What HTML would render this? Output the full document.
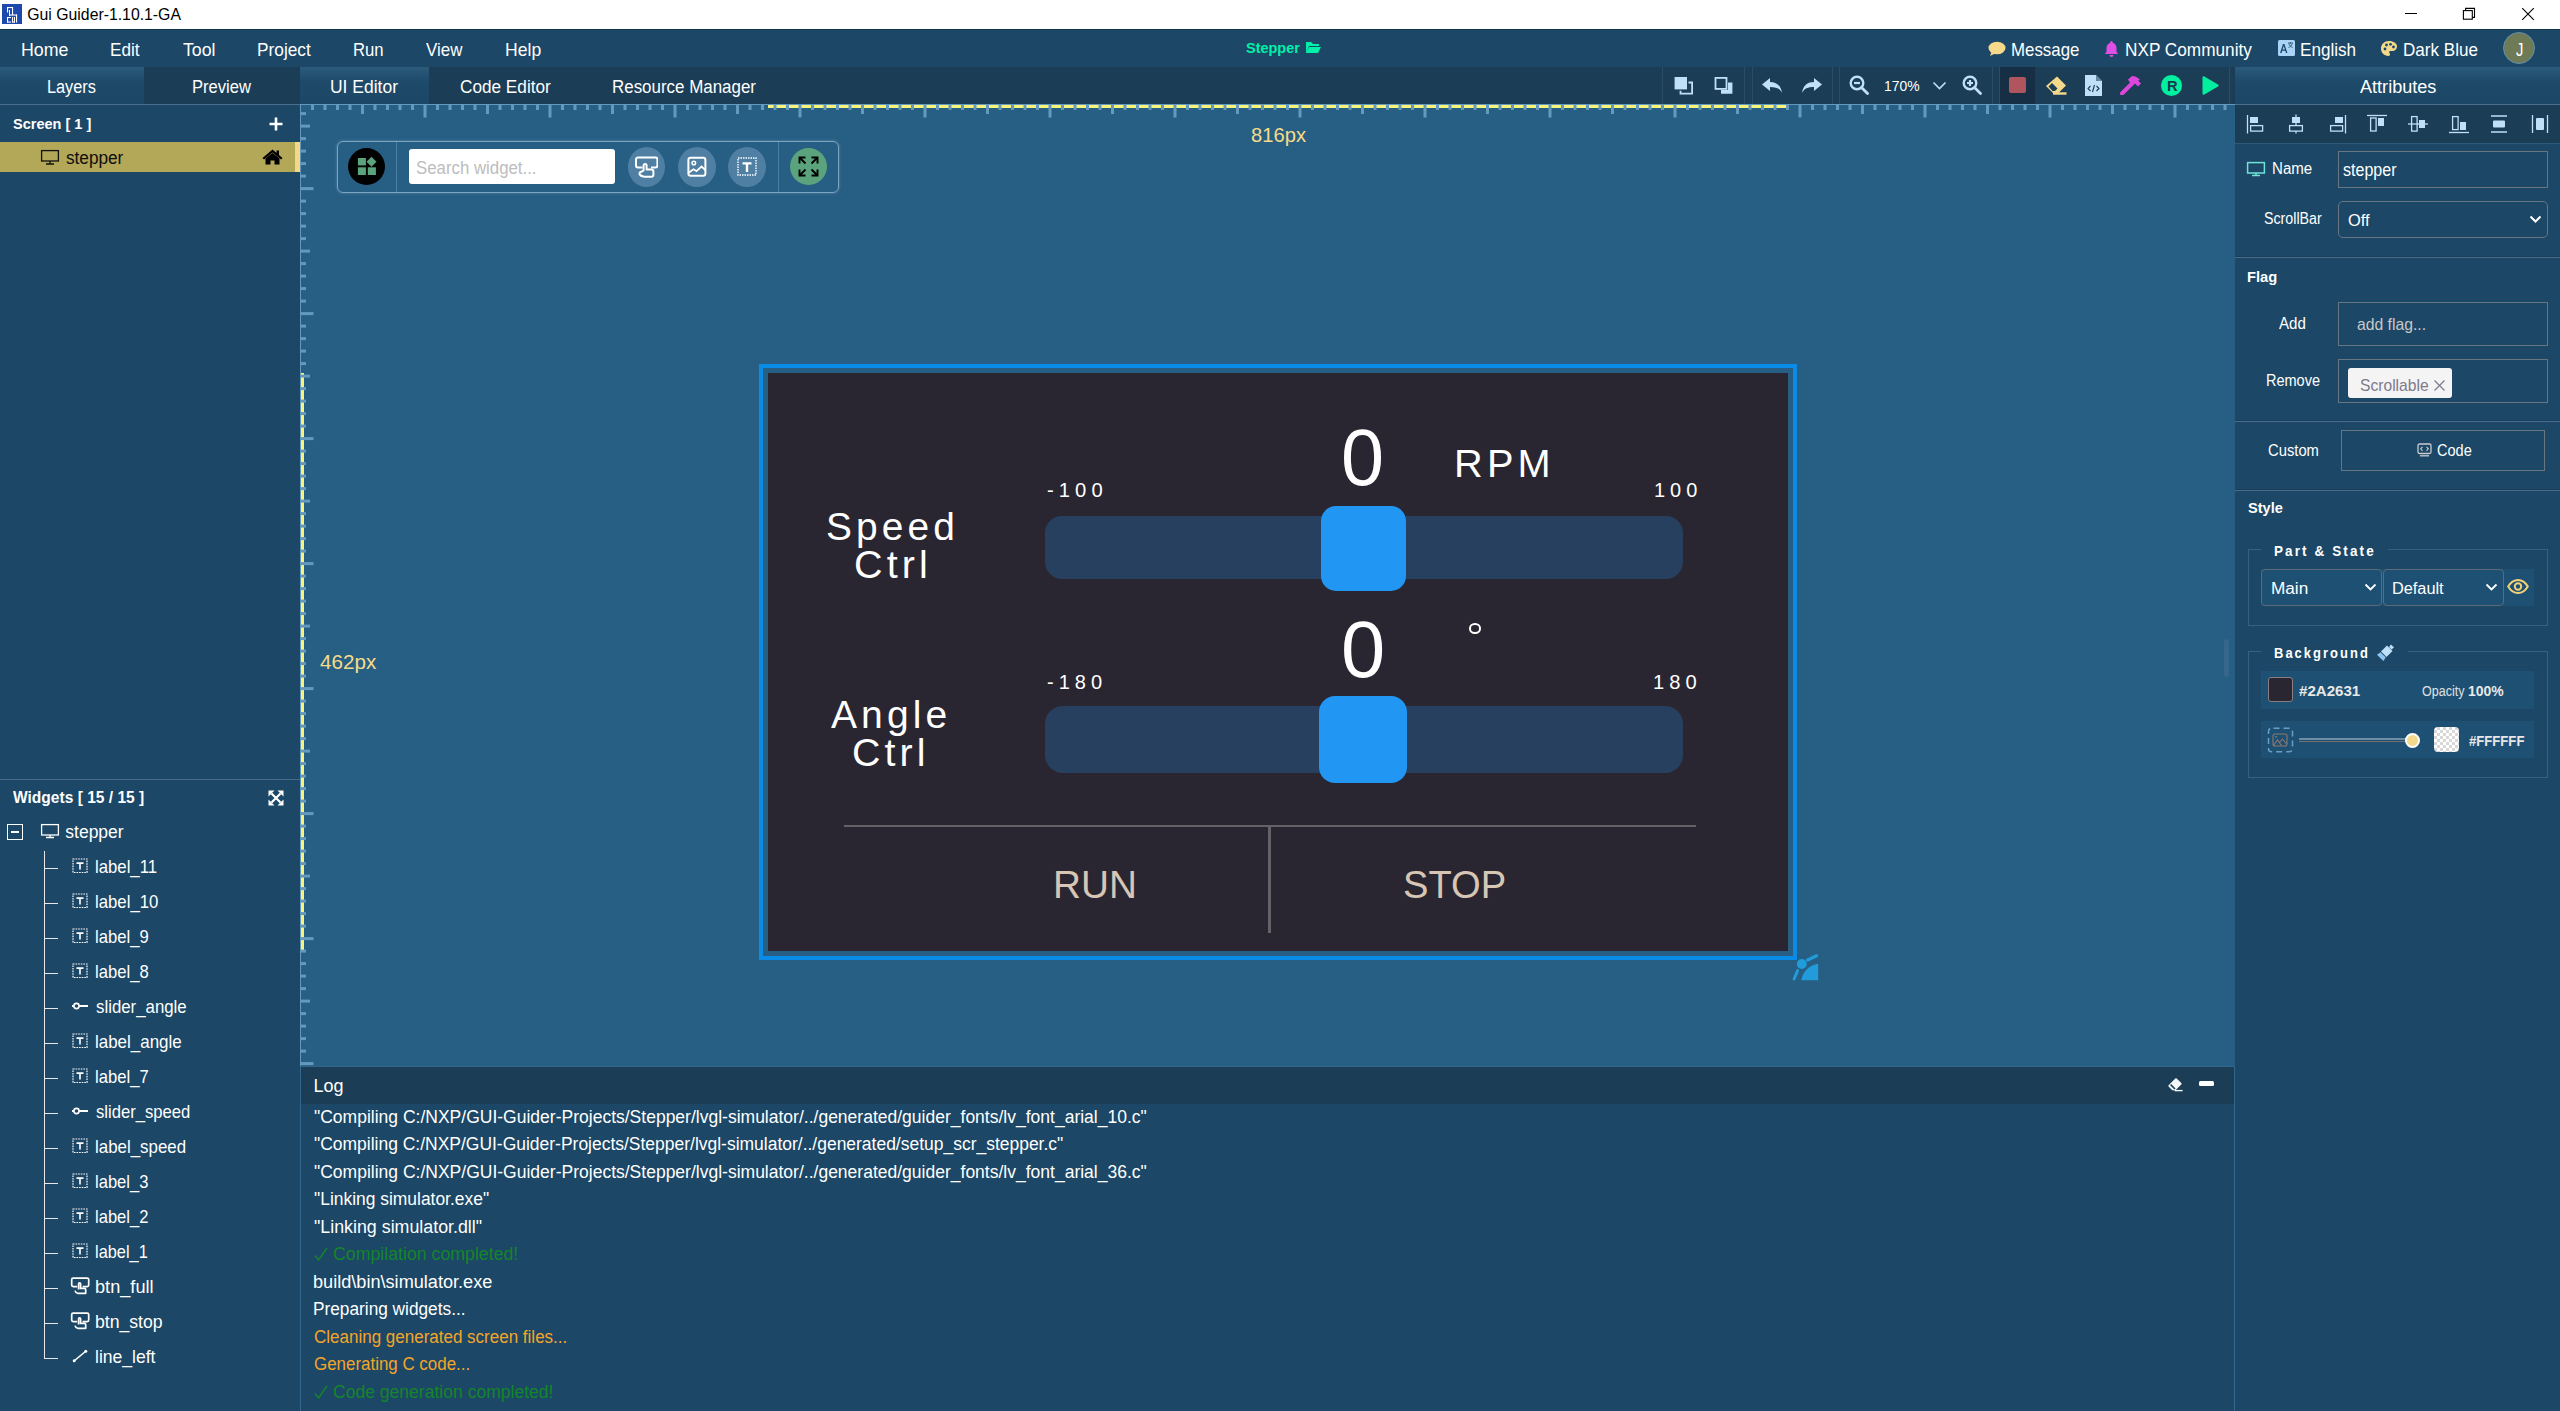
<!DOCTYPE html><html><head><meta charset="utf-8"><style>
*{margin:0;padding:0;box-sizing:border-box}
html,body{width:2560px;height:1411px;overflow:hidden;background:#1c4766;font-family:"Liberation Sans",sans-serif}
.a{position:absolute}
.t{position:absolute;white-space:pre;line-height:1;transform-origin:0 0}
</style></head><body><div class="a" style="left:0px;top:0px;width:2560px;height:29px;background:#fff"></div>
<div class="a" style="left:2px;top:4px;width:20px;height:20px;background:#1d48ad"></div>
<svg class="a" style="left:2px;top:4px;" width="20" height="20" viewBox="0 0 20 20"><g fill="#fff"><rect x="5" y="3" width="1.1" height="5.5"/><rect x="5" y="3" width="6" height="1.1"/><rect x="10" y="3" width="1.1" height="8"/><rect x="7" y="6" width="1" height="6"/><rect x="7" y="10.5" width="8" height="1.1"/><rect x="14" y="10.5" width="1.1" height="8"/><rect x="5" y="13" width="1.1" height="5.5"/><rect x="5" y="13" width="4" height="1"/><rect x="5" y="17.5" width="4" height="1.1"/><rect x="10" y="13" width="1.1" height="5.5"/><rect x="12" y="13" width="1" height="5.5"/><rect x="10" y="17.5" width="3" height="1.1"/></g></svg>
<div class="t" style="left:27.30px;top:7px;font-size:15.8px;color:#000;">Gui Guider-1.10.1-GA</div>
<div class="a" style="left:2405px;top:13px;width:12px;height:1px;background:#000"></div>
<svg class="a" style="left:2462px;top:7px;" width="14" height="14" viewBox="0 0 14 14"><g fill="none" stroke="#000" stroke-width="1.1"><rect x="1.4" y="3.6" width="8.9" height="8.6"/><path d="M3.6 3.6V1.4H12.5V10.4H10.3"/></g></svg>
<svg class="a" style="left:2521px;top:7px;" width="14" height="14" viewBox="0 0 14 14"><path d="M1.2 1.2L12.8 12.8M12.8 1.2L1.2 12.8" stroke="#000" stroke-width="1.1"/></svg>
<div class="a" style="left:0px;top:29px;width:2560px;height:38px;background:#1c4766"></div>
<div class="a" style="left:0px;top:29px;width:2560px;height:1px;background:#123550"></div>
<div class="t" style="left:20.78px;top:41px;font-size:18.4px;color:#fff;transform:scaleX(0.9670);">Home</div>
<div class="t" style="left:110.07px;top:41px;font-size:18.4px;color:#fff;transform:scaleX(0.9320);">Edit</div>
<div class="t" style="left:183.00px;top:41px;font-size:18.4px;color:#fff;transform:scaleX(0.9648);">Tool</div>
<div class="t" style="left:257.06px;top:41px;font-size:18.4px;color:#fff;transform:scaleX(0.9398);">Project</div>
<div class="t" style="left:352.84px;top:41px;font-size:18.4px;color:#fff;transform:scaleX(0.9074);">Run</div>
<div class="t" style="left:426.00px;top:41px;font-size:18.4px;color:#fff;transform:scaleX(0.9193);">View</div>
<div class="t" style="left:505.04px;top:41px;font-size:18.4px;color:#fff;transform:scaleX(0.9564);">Help</div>
<div class="t" style="left:1245.80px;top:40px;font-size:15.4px;color:#00f0a8;font-weight:700;transform:scaleX(0.9405);">Stepper</div>
<svg class="a" style="left:1305px;top:41px;" width="17" height="13" viewBox="0 0 17 13"><path d="M1 12V1h5l2 2h6v2H4L1 12zM4 6h12l-3 6H1z" fill="#00f0a8"/></svg>
<svg class="a" style="left:1988px;top:41px;" width="18" height="16" viewBox="0 0 18 16"><ellipse cx="9" cy="7" rx="8.5" ry="6.3" fill="#f5d98b"/><path d="M2 15l2-5 4 2z" fill="#f5d98b"/></svg>
<div class="t" style="left:2011.08px;top:41px;font-size:18.4px;color:#fff;transform:scaleX(0.9163);">Message</div>
<svg class="a" style="left:2104px;top:40px;" width="15" height="17" viewBox="0 0 15 17"><path d="M7.5 1a1.2 1.2 0 0 1 1.2 1.2v.6C11 3.4 12.5 5.5 12.5 8v4l1.8 2H.7l1.8-2V8C2.5 5.5 4 3.4 6.3 2.8v-.6A1.2 1.2 0 0 1 7.5 1zM5.5 15h4a2 2 0 0 1-4 0z" fill="#e14ee6"/></svg>
<div class="t" style="left:2124.56px;top:41px;font-size:18.4px;color:#fff;transform:scaleX(0.9357);">NXP Community</div>
<svg class="a" style="left:2278px;top:40px;" width="17" height="16" viewBox="0 0 17 16"><rect x="0" y="0" width="17" height="16" rx="1.5" fill="#a9d4f5"/><path d="M2 13l3-9h1.4l3 9H8l-.7-2.2H4.2L3.5 13zM4.6 9.6h2.3L5.7 6z" fill="#1c4766"/><path d="M10 3h5M12.5 2v1.5M10.7 3.5c.8 2 2.2 3.3 4 4M14.3 3.5c-.7 2-2 3.3-3.8 4" stroke="#1c4766" stroke-width=".8" fill="none"/></svg>
<div class="t" style="left:2300.32px;top:41px;font-size:18.4px;color:#fff;transform:scaleX(0.9308);">English</div>
<svg class="a" style="left:2380px;top:40px;" width="18" height="17" viewBox="0 0 18 17"><path d="M9 1C4.3 1 1 4.4 1 8.6 1 12.8 4.2 16 8.3 16c1.3 0 1.7-.8 1.7-1.5 0-1-.9-1.3-.9-2.2 0-.8.7-1.3 1.5-1.3h1.8c2.6 0 4.6-1.8 4.6-4.5C17 3.4 13.5 1 9 1z" fill="#f5d98b"/><circle cx="5" cy="9" r="1.4" fill="#1c4766"/><circle cx="6.5" cy="5" r="1.4" fill="#1c4766"/><circle cx="10.5" cy="4.3" r="1.4" fill="#1c4766"/><circle cx="13.5" cy="7" r="1.4" fill="#1c4766"/></svg>
<div class="t" style="left:2402.82px;top:41px;font-size:18.4px;color:#fff;transform:scaleX(0.9275);">Dark Blue</div>
<div class="a" style="left:2503px;top:32px;width:32px;height:32px;background:#6f7b57;border-radius:50%;border:1.5px solid #5d8fae"></div>
<div class="t" style="left:2515.50px;top:40px;font-size:19px;color:#fff;transform:scaleX(0.7778);">J</div>
<div class="a" style="left:0px;top:67px;width:2560px;height:38px;background:#1b3d55"></div>
<div class="a" style="left:0px;top:67px;width:144px;height:38px;background:linear-gradient(#2b5a7a,#1e4a6a 40%,#1c4766)"></div>
<div class="a" style="left:300px;top:67px;width:129px;height:38px;background:linear-gradient(#2b5a7a,#1e4a6a 40%,#1c4766)"></div>
<div class="a" style="left:2235px;top:67px;width:325px;height:38px;background:linear-gradient(#2b5a7a,#1e4a6a 40%,#1c4766)"></div>
<div class="a" style="left:0px;top:104px;width:300px;height:1px;background:#4a6e8c"></div>
<div class="a" style="left:2235px;top:104px;width:325px;height:1px;background:#4a6e8c"></div>
<div class="t" style="left:47.49px;top:78px;font-size:18px;color:#fff;transform:scaleX(0.9052);">Layers</div>
<div class="t" style="left:192.08px;top:78px;font-size:18px;color:#fff;transform:scaleX(0.9216);">Preview</div>
<div class="t" style="left:330.03px;top:78px;font-size:18px;color:#fff;transform:scaleX(0.9706);">UI Editor</div>
<div class="t" style="left:460.00px;top:78px;font-size:18px;color:#fff;transform:scaleX(0.9547);">Code Editor</div>
<div class="t" style="left:612.06px;top:78px;font-size:18px;color:#fff;transform:scaleX(0.9403);">Resource Manager</div>
<div class="t" style="left:2359.60px;top:78px;font-size:18px;color:#fff;transform:scaleX(1.0048);">Attributes</div>
<div class="a" style="left:0px;top:105px;width:300px;height:1306px;background:#1c4766"></div>
<div class="t" style="left:12.70px;top:116px;font-size:15.4px;color:#fff;font-weight:700;transform:scaleX(0.9427);">Screen [ 1 ]</div>
<svg class="a" style="left:269px;top:117px;" width="14" height="14" viewBox="0 0 14 14"><path d="M7 0.5v13M0.5 7h13" stroke="#fff" stroke-width="2.6"/></svg>
<div class="a" style="left:0px;top:142px;width:300px;height:30px;background:#b3a758"></div>
<div class="a" style="left:295px;top:142px;width:5px;height:30px;background:#f2d98a"></div>
<svg class="a" style="left:40px;top:149px;" width="20" height="16" viewBox="0 0 20 16"><rect x="1.6" y="1.6" width="16.8" height="10.4" fill="none" stroke="#111" stroke-width="1.3"/><path d="M10 12v3M6 15h8" stroke="#111" stroke-width="1.3"/></svg>
<div class="t" style="left:65.50px;top:150px;font-size:17.5px;color:#0e0e0e;transform:scaleX(0.9822);">stepper</div>
<svg class="a" style="left:262px;top:149px;" width="21" height="16" viewBox="0 0 21 16"><path d="M10.5 0.5L0.5 9l1.5 1.6L10.5 3.4 19 10.6 20.5 9 17 6V1.5h-2.5v2.4z" fill="#000"/><path d="M3.5 9.5v6h5v-4h4v4h5v-6L10.5 4z" fill="#000"/></svg>
<div class="a" style="left:0px;top:779px;width:300px;height:1px;background:#4a6b86"></div>
<div class="t" style="left:12.50px;top:790px;font-size:16px;color:#fff;font-weight:700;transform:scaleX(0.9720);">Widgets [ 15 / 15 ]</div>
<svg class="a" style="left:268px;top:790px;" width="16" height="16" viewBox="0 0 16 16"><path d="M3.5 3.5L12.5 12.5M12.5 3.5L3.5 12.5" stroke="#fff" stroke-width="2.2"/><g fill="#fff"><path d="M0.5 0.5h6l-6 6z"/><path d="M15.5 0.5h-6l6 6z"/><path d="M0.5 15.5h6l-6-6z"/><path d="M15.5 15.5h-6l6-6z"/></g></svg>
<div class="a" style="left:7px;top:824px;width:16px;height:16px;border:1.5px solid #fff"></div>
<div class="a" style="left:11px;top:831px;width:8px;height:2px;background:#fff"></div>
<svg class="a" style="left:40px;top:823px;" width="20" height="16" viewBox="0 0 20 16"><rect x="1.6" y="1.6" width="16.8" height="10.4" fill="none" stroke="#fff" stroke-width="1.3"/><path d="M10 12v2.5M6 14.5h8" stroke="#fff" stroke-width="1.3"/></svg>
<div class="t" style="left:65.30px;top:824px;font-size:17.5px;color:#fff;">stepper</div>
<div class="a" style="left:44px;top:851px;width:1.3px;height:508px;background:#e8e8e8"></div>
<div class="a" style="left:44px;top:868px;width:14px;height:1.3px;background:#e8e8e8"></div>
<svg class="a" style="left:72px;top:858px;" width="16" height="16" viewBox="0 0 16 16"><rect x="1" y="1" width="14" height="13.5" fill="none" stroke="#fff" stroke-width="1.2" stroke-dasharray="1.6 1"/><path d="M4.5 4.3h7v1.6H8.8v5.6H7.2V5.9H4.5z" fill="#fff"/></svg>
<div class="t" style="left:94.89px;top:858px;font-size:18.5px;color:#fff;transform:scaleX(0.9050);">label_11</div>
<div class="a" style="left:44px;top:903px;width:14px;height:1.3px;background:#e8e8e8"></div>
<svg class="a" style="left:72px;top:893px;" width="16" height="16" viewBox="0 0 16 16"><rect x="1" y="1" width="14" height="13.5" fill="none" stroke="#fff" stroke-width="1.2" stroke-dasharray="1.6 1"/><path d="M4.5 4.3h7v1.6H8.8v5.6H7.2V5.9H4.5z" fill="#fff"/></svg>
<div class="t" style="left:94.89px;top:893px;font-size:18.5px;color:#fff;transform:scaleX(0.9059);">label_10</div>
<div class="a" style="left:44px;top:938px;width:14px;height:1.3px;background:#e8e8e8"></div>
<svg class="a" style="left:72px;top:928px;" width="16" height="16" viewBox="0 0 16 16"><rect x="1" y="1" width="14" height="13.5" fill="none" stroke="#fff" stroke-width="1.2" stroke-dasharray="1.6 1"/><path d="M4.5 4.3h7v1.6H8.8v5.6H7.2V5.9H4.5z" fill="#fff"/></svg>
<div class="t" style="left:94.90px;top:928px;font-size:18.5px;color:#fff;transform:scaleX(0.8994);">label_9</div>
<div class="a" style="left:44px;top:973px;width:14px;height:1.3px;background:#e8e8e8"></div>
<svg class="a" style="left:72px;top:963px;" width="16" height="16" viewBox="0 0 16 16"><rect x="1" y="1" width="14" height="13.5" fill="none" stroke="#fff" stroke-width="1.2" stroke-dasharray="1.6 1"/><path d="M4.5 4.3h7v1.6H8.8v5.6H7.2V5.9H4.5z" fill="#fff"/></svg>
<div class="t" style="left:94.90px;top:963px;font-size:18.5px;color:#fff;transform:scaleX(0.8994);">label_8</div>
<div class="a" style="left:44px;top:1008px;width:14px;height:1.3px;background:#e8e8e8"></div>
<svg class="a" style="left:72px;top:998px;" width="16" height="16" viewBox="0 0 16 16"><circle cx="4.5" cy="8" r="2.6" fill="none" stroke="#fff" stroke-width="1.6"/><path d="M0 8h2M7 8h9" stroke="#fff" stroke-width="1.8"/></svg>
<div class="t" style="left:95.80px;top:998px;font-size:18.5px;color:#fff;transform:scaleX(0.9088);">slider_angle</div>
<div class="a" style="left:44px;top:1043px;width:14px;height:1.3px;background:#e8e8e8"></div>
<svg class="a" style="left:72px;top:1033px;" width="16" height="16" viewBox="0 0 16 16"><rect x="1" y="1" width="14" height="13.5" fill="none" stroke="#fff" stroke-width="1.2" stroke-dasharray="1.6 1"/><path d="M4.5 4.3h7v1.6H8.8v5.6H7.2V5.9H4.5z" fill="#fff"/></svg>
<div class="t" style="left:94.88px;top:1033px;font-size:18.5px;color:#fff;transform:scaleX(0.9159);">label_angle</div>
<div class="a" style="left:44px;top:1078px;width:14px;height:1.3px;background:#e8e8e8"></div>
<svg class="a" style="left:72px;top:1068px;" width="16" height="16" viewBox="0 0 16 16"><rect x="1" y="1" width="14" height="13.5" fill="none" stroke="#fff" stroke-width="1.2" stroke-dasharray="1.6 1"/><path d="M4.5 4.3h7v1.6H8.8v5.6H7.2V5.9H4.5z" fill="#fff"/></svg>
<div class="t" style="left:94.90px;top:1068px;font-size:18.5px;color:#fff;transform:scaleX(0.8994);">label_7</div>
<div class="a" style="left:44px;top:1113px;width:14px;height:1.3px;background:#e8e8e8"></div>
<svg class="a" style="left:72px;top:1103px;" width="16" height="16" viewBox="0 0 16 16"><circle cx="4.5" cy="8" r="2.6" fill="none" stroke="#fff" stroke-width="1.6"/><path d="M0 8h2M7 8h9" stroke="#fff" stroke-width="1.8"/></svg>
<div class="t" style="left:95.80px;top:1103px;font-size:18.5px;color:#fff;transform:scaleX(0.8995);">slider_speed</div>
<div class="a" style="left:44px;top:1148px;width:14px;height:1.3px;background:#e8e8e8"></div>
<svg class="a" style="left:72px;top:1138px;" width="16" height="16" viewBox="0 0 16 16"><rect x="1" y="1" width="14" height="13.5" fill="none" stroke="#fff" stroke-width="1.2" stroke-dasharray="1.6 1"/><path d="M4.5 4.3h7v1.6H8.8v5.6H7.2V5.9H4.5z" fill="#fff"/></svg>
<div class="t" style="left:94.89px;top:1138px;font-size:18.5px;color:#fff;transform:scaleX(0.9128);">label_speed</div>
<div class="a" style="left:44px;top:1183px;width:14px;height:1.3px;background:#e8e8e8"></div>
<svg class="a" style="left:72px;top:1173px;" width="16" height="16" viewBox="0 0 16 16"><rect x="1" y="1" width="14" height="13.5" fill="none" stroke="#fff" stroke-width="1.2" stroke-dasharray="1.6 1"/><path d="M4.5 4.3h7v1.6H8.8v5.6H7.2V5.9H4.5z" fill="#fff"/></svg>
<div class="t" style="left:94.90px;top:1173px;font-size:18.5px;color:#fff;transform:scaleX(0.8959);">label_3</div>
<div class="a" style="left:44px;top:1218px;width:14px;height:1.3px;background:#e8e8e8"></div>
<svg class="a" style="left:72px;top:1208px;" width="16" height="16" viewBox="0 0 16 16"><rect x="1" y="1" width="14" height="13.5" fill="none" stroke="#fff" stroke-width="1.2" stroke-dasharray="1.6 1"/><path d="M4.5 4.3h7v1.6H8.8v5.6H7.2V5.9H4.5z" fill="#fff"/></svg>
<div class="t" style="left:94.90px;top:1208px;font-size:18.5px;color:#fff;transform:scaleX(0.8959);">label_2</div>
<div class="a" style="left:44px;top:1253px;width:14px;height:1.3px;background:#e8e8e8"></div>
<svg class="a" style="left:72px;top:1243px;" width="16" height="16" viewBox="0 0 16 16"><rect x="1" y="1" width="14" height="13.5" fill="none" stroke="#fff" stroke-width="1.2" stroke-dasharray="1.6 1"/><path d="M4.5 4.3h7v1.6H8.8v5.6H7.2V5.9H4.5z" fill="#fff"/></svg>
<div class="t" style="left:94.92px;top:1243px;font-size:18.5px;color:#fff;transform:scaleX(0.8839);">label_1</div>
<div class="a" style="left:44px;top:1288px;width:14px;height:1.3px;background:#e8e8e8"></div>
<svg class="a" style="left:70px;top:1276px;" width="20" height="20" viewBox="0 0 20 20"><path d="M7.2 10.6H3.2A1.5 1.5 0 0 1 1.7 9.1V3.6A1.5 1.5 0 0 1 3.2 2.1H17.2A1.5 1.5 0 0 1 18.7 3.6V9.1A1.5 1.5 0 0 1 17.2 10.6H12.6" fill="none" stroke="#fff" stroke-width="1.7"/><path d="M8.6 13.6V7.8A1 1 0 0 1 10.6 7.8V12.4H14.4A1.3 1.3 0 0 1 15.7 13.7V17.3H8Q5.6 17 5 14.6" fill="none" stroke="#fff" stroke-width="1.7" stroke-linejoin="round"/></svg>
<div class="t" style="left:94.82px;top:1278px;font-size:18.5px;color:#fff;transform:scaleX(0.9818);">btn_full</div>
<div class="a" style="left:44px;top:1323px;width:14px;height:1.3px;background:#e8e8e8"></div>
<svg class="a" style="left:70px;top:1311px;" width="20" height="20" viewBox="0 0 20 20"><path d="M7.2 10.6H3.2A1.5 1.5 0 0 1 1.7 9.1V3.6A1.5 1.5 0 0 1 3.2 2.1H17.2A1.5 1.5 0 0 1 18.7 3.6V9.1A1.5 1.5 0 0 1 17.2 10.6H12.6" fill="none" stroke="#fff" stroke-width="1.7"/><path d="M8.6 13.6V7.8A1 1 0 0 1 10.6 7.8V12.4H14.4A1.3 1.3 0 0 1 15.7 13.7V17.3H8Q5.6 17 5 14.6" fill="none" stroke="#fff" stroke-width="1.7" stroke-linejoin="round"/></svg>
<div class="t" style="left:94.85px;top:1313px;font-size:18.5px;color:#fff;transform:scaleX(0.9529);">btn_stop</div>
<div class="a" style="left:44px;top:1358px;width:14px;height:1.3px;background:#e8e8e8"></div>
<svg class="a" style="left:72px;top:1348px;" width="16" height="16" viewBox="0 0 16 16"><path d="M2 13L14 3" stroke="#fff" stroke-width="1.6"/><circle cx="2.2" cy="12.8" r="1.5" fill="#fff"/><circle cx="13.8" cy="3.2" r="1.5" fill="#fff"/></svg>
<div class="t" style="left:94.85px;top:1348px;font-size:18.5px;color:#fff;transform:scaleX(0.9485);">line_left</div>
<div class="a" style="left:300px;top:105px;width:1935px;height:962px;background:#275e83"></div>
<div class="a" style="left:2224px;top:639px;width:5px;height:38px;background:#366689;border-radius:3px"></div>
<svg class="a" style="left:300px;top:104px;" width="1935" height="20" viewBox="0 0 1935 20"><rect x="0" y="0" width="1935" height="1" fill="#6499bd"/><rect x="468" y="1" width="1020" height="3" fill="#f8f47a"/><rect x="11.0" y="0" width="3" height="6" fill="#6499bd"/><rect x="23.5" y="0" width="3" height="6" fill="#6499bd"/><rect x="36.0" y="0" width="3" height="6" fill="#6499bd"/><rect x="48.5" y="0" width="3" height="6" fill="#6499bd"/><rect x="61.0" y="0" width="3" height="10" fill="#6499bd"/><rect x="73.5" y="0" width="3" height="6" fill="#6499bd"/><rect x="86.0" y="0" width="3" height="6" fill="#6499bd"/><rect x="98.5" y="0" width="3" height="6" fill="#6499bd"/><rect x="111.0" y="0" width="3" height="6" fill="#6499bd"/><rect x="123.5" y="0" width="3" height="13.5" fill="#6499bd"/><rect x="136.0" y="0" width="3" height="6" fill="#6499bd"/><rect x="148.5" y="0" width="3" height="6" fill="#6499bd"/><rect x="161.0" y="0" width="3" height="6" fill="#6499bd"/><rect x="173.5" y="0" width="3" height="6" fill="#6499bd"/><rect x="186.0" y="0" width="3" height="10" fill="#6499bd"/><rect x="198.5" y="0" width="3" height="6" fill="#6499bd"/><rect x="211.0" y="0" width="3" height="6" fill="#6499bd"/><rect x="223.5" y="0" width="3" height="6" fill="#6499bd"/><rect x="236.0" y="0" width="3" height="6" fill="#6499bd"/><rect x="248.5" y="0" width="3" height="13.5" fill="#6499bd"/><rect x="261.0" y="0" width="3" height="6" fill="#6499bd"/><rect x="273.5" y="0" width="3" height="6" fill="#6499bd"/><rect x="286.0" y="0" width="3" height="6" fill="#6499bd"/><rect x="298.5" y="0" width="3" height="6" fill="#6499bd"/><rect x="311.0" y="0" width="3" height="10" fill="#6499bd"/><rect x="323.5" y="0" width="3" height="6" fill="#6499bd"/><rect x="336.0" y="0" width="3" height="6" fill="#6499bd"/><rect x="348.5" y="0" width="3" height="6" fill="#6499bd"/><rect x="361.0" y="0" width="3" height="6" fill="#6499bd"/><rect x="373.5" y="0" width="3" height="13.5" fill="#6499bd"/><rect x="386.0" y="0" width="3" height="6" fill="#6499bd"/><rect x="398.5" y="0" width="3" height="6" fill="#6499bd"/><rect x="411.0" y="0" width="3" height="6" fill="#6499bd"/><rect x="423.5" y="0" width="3" height="6" fill="#6499bd"/><rect x="436.0" y="0" width="3" height="10" fill="#6499bd"/><rect x="448.5" y="0" width="3" height="6" fill="#6499bd"/><rect x="461.0" y="0" width="3" height="6" fill="#6499bd"/><rect x="473.5" y="0" width="3" height="6" fill="#6499bd"/><rect x="486.0" y="0" width="3" height="6" fill="#6499bd"/><rect x="498.5" y="0" width="3" height="13.5" fill="#6499bd"/><rect x="511.0" y="0" width="3" height="6" fill="#6499bd"/><rect x="523.5" y="0" width="3" height="6" fill="#6499bd"/><rect x="536.0" y="0" width="3" height="6" fill="#6499bd"/><rect x="548.5" y="0" width="3" height="6" fill="#6499bd"/><rect x="561.0" y="0" width="3" height="10" fill="#6499bd"/><rect x="573.5" y="0" width="3" height="6" fill="#6499bd"/><rect x="586.0" y="0" width="3" height="6" fill="#6499bd"/><rect x="598.5" y="0" width="3" height="6" fill="#6499bd"/><rect x="611.0" y="0" width="3" height="6" fill="#6499bd"/><rect x="623.5" y="0" width="3" height="13.5" fill="#6499bd"/><rect x="636.0" y="0" width="3" height="6" fill="#6499bd"/><rect x="648.5" y="0" width="3" height="6" fill="#6499bd"/><rect x="661.0" y="0" width="3" height="6" fill="#6499bd"/><rect x="673.5" y="0" width="3" height="6" fill="#6499bd"/><rect x="686.0" y="0" width="3" height="10" fill="#6499bd"/><rect x="698.5" y="0" width="3" height="6" fill="#6499bd"/><rect x="711.0" y="0" width="3" height="6" fill="#6499bd"/><rect x="723.5" y="0" width="3" height="6" fill="#6499bd"/><rect x="736.0" y="0" width="3" height="6" fill="#6499bd"/><rect x="748.5" y="0" width="3" height="13.5" fill="#6499bd"/><rect x="761.0" y="0" width="3" height="6" fill="#6499bd"/><rect x="773.5" y="0" width="3" height="6" fill="#6499bd"/><rect x="786.0" y="0" width="3" height="6" fill="#6499bd"/><rect x="798.5" y="0" width="3" height="6" fill="#6499bd"/><rect x="811.0" y="0" width="3" height="10" fill="#6499bd"/><rect x="823.5" y="0" width="3" height="6" fill="#6499bd"/><rect x="836.0" y="0" width="3" height="6" fill="#6499bd"/><rect x="848.5" y="0" width="3" height="6" fill="#6499bd"/><rect x="861.0" y="0" width="3" height="6" fill="#6499bd"/><rect x="873.5" y="0" width="3" height="13.5" fill="#6499bd"/><rect x="886.0" y="0" width="3" height="6" fill="#6499bd"/><rect x="898.5" y="0" width="3" height="6" fill="#6499bd"/><rect x="911.0" y="0" width="3" height="6" fill="#6499bd"/><rect x="923.5" y="0" width="3" height="6" fill="#6499bd"/><rect x="936.0" y="0" width="3" height="10" fill="#6499bd"/><rect x="948.5" y="0" width="3" height="6" fill="#6499bd"/><rect x="961.0" y="0" width="3" height="6" fill="#6499bd"/><rect x="973.5" y="0" width="3" height="6" fill="#6499bd"/><rect x="986.0" y="0" width="3" height="6" fill="#6499bd"/><rect x="998.5" y="0" width="3" height="13.5" fill="#6499bd"/><rect x="1011.0" y="0" width="3" height="6" fill="#6499bd"/><rect x="1023.5" y="0" width="3" height="6" fill="#6499bd"/><rect x="1036.0" y="0" width="3" height="6" fill="#6499bd"/><rect x="1048.5" y="0" width="3" height="6" fill="#6499bd"/><rect x="1061.0" y="0" width="3" height="10" fill="#6499bd"/><rect x="1073.5" y="0" width="3" height="6" fill="#6499bd"/><rect x="1086.0" y="0" width="3" height="6" fill="#6499bd"/><rect x="1098.5" y="0" width="3" height="6" fill="#6499bd"/><rect x="1111.0" y="0" width="3" height="6" fill="#6499bd"/><rect x="1123.5" y="0" width="3" height="13.5" fill="#6499bd"/><rect x="1136.0" y="0" width="3" height="6" fill="#6499bd"/><rect x="1148.5" y="0" width="3" height="6" fill="#6499bd"/><rect x="1161.0" y="0" width="3" height="6" fill="#6499bd"/><rect x="1173.5" y="0" width="3" height="6" fill="#6499bd"/><rect x="1186.0" y="0" width="3" height="10" fill="#6499bd"/><rect x="1198.5" y="0" width="3" height="6" fill="#6499bd"/><rect x="1211.0" y="0" width="3" height="6" fill="#6499bd"/><rect x="1223.5" y="0" width="3" height="6" fill="#6499bd"/><rect x="1236.0" y="0" width="3" height="6" fill="#6499bd"/><rect x="1248.5" y="0" width="3" height="13.5" fill="#6499bd"/><rect x="1261.0" y="0" width="3" height="6" fill="#6499bd"/><rect x="1273.5" y="0" width="3" height="6" fill="#6499bd"/><rect x="1286.0" y="0" width="3" height="6" fill="#6499bd"/><rect x="1298.5" y="0" width="3" height="6" fill="#6499bd"/><rect x="1311.0" y="0" width="3" height="10" fill="#6499bd"/><rect x="1323.5" y="0" width="3" height="6" fill="#6499bd"/><rect x="1336.0" y="0" width="3" height="6" fill="#6499bd"/><rect x="1348.5" y="0" width="3" height="6" fill="#6499bd"/><rect x="1361.0" y="0" width="3" height="6" fill="#6499bd"/><rect x="1373.5" y="0" width="3" height="13.5" fill="#6499bd"/><rect x="1386.0" y="0" width="3" height="6" fill="#6499bd"/><rect x="1398.5" y="0" width="3" height="6" fill="#6499bd"/><rect x="1411.0" y="0" width="3" height="6" fill="#6499bd"/><rect x="1423.5" y="0" width="3" height="6" fill="#6499bd"/><rect x="1436.0" y="0" width="3" height="10" fill="#6499bd"/><rect x="1448.5" y="0" width="3" height="6" fill="#6499bd"/><rect x="1461.0" y="0" width="3" height="6" fill="#6499bd"/><rect x="1473.5" y="0" width="3" height="6" fill="#6499bd"/><rect x="1486.0" y="0" width="3" height="6" fill="#6499bd"/><rect x="1498.5" y="0" width="3" height="13.5" fill="#6499bd"/><rect x="1511.0" y="0" width="3" height="6" fill="#6499bd"/><rect x="1523.5" y="0" width="3" height="6" fill="#6499bd"/><rect x="1536.0" y="0" width="3" height="6" fill="#6499bd"/><rect x="1548.5" y="0" width="3" height="6" fill="#6499bd"/><rect x="1561.0" y="0" width="3" height="10" fill="#6499bd"/><rect x="1573.5" y="0" width="3" height="6" fill="#6499bd"/><rect x="1586.0" y="0" width="3" height="6" fill="#6499bd"/><rect x="1598.5" y="0" width="3" height="6" fill="#6499bd"/><rect x="1611.0" y="0" width="3" height="6" fill="#6499bd"/><rect x="1623.5" y="0" width="3" height="13.5" fill="#6499bd"/><rect x="1636.0" y="0" width="3" height="6" fill="#6499bd"/><rect x="1648.5" y="0" width="3" height="6" fill="#6499bd"/><rect x="1661.0" y="0" width="3" height="6" fill="#6499bd"/><rect x="1673.5" y="0" width="3" height="6" fill="#6499bd"/><rect x="1686.0" y="0" width="3" height="10" fill="#6499bd"/><rect x="1698.5" y="0" width="3" height="6" fill="#6499bd"/><rect x="1711.0" y="0" width="3" height="6" fill="#6499bd"/><rect x="1723.5" y="0" width="3" height="6" fill="#6499bd"/><rect x="1736.0" y="0" width="3" height="6" fill="#6499bd"/><rect x="1748.5" y="0" width="3" height="13.5" fill="#6499bd"/><rect x="1761.0" y="0" width="3" height="6" fill="#6499bd"/><rect x="1773.5" y="0" width="3" height="6" fill="#6499bd"/><rect x="1786.0" y="0" width="3" height="6" fill="#6499bd"/><rect x="1798.5" y="0" width="3" height="6" fill="#6499bd"/><rect x="1811.0" y="0" width="3" height="10" fill="#6499bd"/><rect x="1823.5" y="0" width="3" height="6" fill="#6499bd"/><rect x="1836.0" y="0" width="3" height="6" fill="#6499bd"/><rect x="1848.5" y="0" width="3" height="6" fill="#6499bd"/><rect x="1861.0" y="0" width="3" height="6" fill="#6499bd"/><rect x="1873.5" y="0" width="3" height="13.5" fill="#6499bd"/><rect x="1886.0" y="0" width="3" height="6" fill="#6499bd"/><rect x="1898.5" y="0" width="3" height="6" fill="#6499bd"/><rect x="1911.0" y="0" width="3" height="6" fill="#6499bd"/><rect x="1923.5" y="0" width="3" height="6" fill="#6499bd"/></svg>
<svg class="a" style="left:300px;top:105px;" width="20" height="962" viewBox="0 0 20 962"><rect x="0" y="0" width="1" height="962" fill="#6499bd"/><rect x="1" y="268" width="3" height="578" fill="#f8f47a"/><rect x="0" y="7.1" width="6" height="3" fill="#6499bd"/><rect x="0" y="19.6" width="10" height="3" fill="#6499bd"/><rect x="0" y="32.1" width="6" height="3" fill="#6499bd"/><rect x="0" y="44.6" width="6" height="3" fill="#6499bd"/><rect x="0" y="57.1" width="6" height="3" fill="#6499bd"/><rect x="0" y="69.6" width="6" height="3" fill="#6499bd"/><rect x="0" y="82.1" width="13.5" height="3" fill="#6499bd"/><rect x="0" y="94.6" width="6" height="3" fill="#6499bd"/><rect x="0" y="107.1" width="6" height="3" fill="#6499bd"/><rect x="0" y="119.6" width="6" height="3" fill="#6499bd"/><rect x="0" y="132.1" width="6" height="3" fill="#6499bd"/><rect x="0" y="144.6" width="10" height="3" fill="#6499bd"/><rect x="0" y="157.1" width="6" height="3" fill="#6499bd"/><rect x="0" y="169.6" width="6" height="3" fill="#6499bd"/><rect x="0" y="182.1" width="6" height="3" fill="#6499bd"/><rect x="0" y="194.6" width="6" height="3" fill="#6499bd"/><rect x="0" y="207.1" width="13.5" height="3" fill="#6499bd"/><rect x="0" y="219.6" width="6" height="3" fill="#6499bd"/><rect x="0" y="232.1" width="6" height="3" fill="#6499bd"/><rect x="0" y="244.6" width="6" height="3" fill="#6499bd"/><rect x="0" y="257.1" width="6" height="3" fill="#6499bd"/><rect x="0" y="269.6" width="10" height="3" fill="#6499bd"/><rect x="0" y="282.1" width="6" height="3" fill="#6499bd"/><rect x="0" y="294.6" width="6" height="3" fill="#6499bd"/><rect x="0" y="307.1" width="6" height="3" fill="#6499bd"/><rect x="0" y="319.6" width="6" height="3" fill="#6499bd"/><rect x="0" y="332.1" width="13.5" height="3" fill="#6499bd"/><rect x="0" y="344.6" width="6" height="3" fill="#6499bd"/><rect x="0" y="357.1" width="6" height="3" fill="#6499bd"/><rect x="0" y="369.6" width="6" height="3" fill="#6499bd"/><rect x="0" y="382.1" width="6" height="3" fill="#6499bd"/><rect x="0" y="394.6" width="10" height="3" fill="#6499bd"/><rect x="0" y="407.1" width="6" height="3" fill="#6499bd"/><rect x="0" y="419.6" width="6" height="3" fill="#6499bd"/><rect x="0" y="432.1" width="6" height="3" fill="#6499bd"/><rect x="0" y="444.6" width="6" height="3" fill="#6499bd"/><rect x="0" y="457.1" width="13.5" height="3" fill="#6499bd"/><rect x="0" y="469.6" width="6" height="3" fill="#6499bd"/><rect x="0" y="482.1" width="6" height="3" fill="#6499bd"/><rect x="0" y="494.6" width="6" height="3" fill="#6499bd"/><rect x="0" y="507.1" width="6" height="3" fill="#6499bd"/><rect x="0" y="519.6" width="10" height="3" fill="#6499bd"/><rect x="0" y="532.1" width="6" height="3" fill="#6499bd"/><rect x="0" y="544.6" width="6" height="3" fill="#6499bd"/><rect x="0" y="557.1" width="6" height="3" fill="#6499bd"/><rect x="0" y="569.6" width="6" height="3" fill="#6499bd"/><rect x="0" y="582.1" width="13.5" height="3" fill="#6499bd"/><rect x="0" y="594.6" width="6" height="3" fill="#6499bd"/><rect x="0" y="607.1" width="6" height="3" fill="#6499bd"/><rect x="0" y="619.6" width="6" height="3" fill="#6499bd"/><rect x="0" y="632.1" width="6" height="3" fill="#6499bd"/><rect x="0" y="644.6" width="10" height="3" fill="#6499bd"/><rect x="0" y="657.1" width="6" height="3" fill="#6499bd"/><rect x="0" y="669.6" width="6" height="3" fill="#6499bd"/><rect x="0" y="682.1" width="6" height="3" fill="#6499bd"/><rect x="0" y="694.6" width="6" height="3" fill="#6499bd"/><rect x="0" y="707.1" width="13.5" height="3" fill="#6499bd"/><rect x="0" y="719.6" width="6" height="3" fill="#6499bd"/><rect x="0" y="732.1" width="6" height="3" fill="#6499bd"/><rect x="0" y="744.6" width="6" height="3" fill="#6499bd"/><rect x="0" y="757.1" width="6" height="3" fill="#6499bd"/><rect x="0" y="769.6" width="10" height="3" fill="#6499bd"/><rect x="0" y="782.1" width="6" height="3" fill="#6499bd"/><rect x="0" y="794.6" width="6" height="3" fill="#6499bd"/><rect x="0" y="807.1" width="6" height="3" fill="#6499bd"/><rect x="0" y="819.6" width="6" height="3" fill="#6499bd"/><rect x="0" y="832.1" width="13.5" height="3" fill="#6499bd"/><rect x="0" y="844.6" width="6" height="3" fill="#6499bd"/><rect x="0" y="857.1" width="6" height="3" fill="#6499bd"/><rect x="0" y="869.6" width="6" height="3" fill="#6499bd"/><rect x="0" y="882.1" width="6" height="3" fill="#6499bd"/><rect x="0" y="894.6" width="10" height="3" fill="#6499bd"/><rect x="0" y="907.1" width="6" height="3" fill="#6499bd"/><rect x="0" y="919.6" width="6" height="3" fill="#6499bd"/><rect x="0" y="932.1" width="6" height="3" fill="#6499bd"/><rect x="0" y="944.6" width="6" height="3" fill="#6499bd"/><rect x="0" y="957.1" width="13.5" height="3" fill="#6499bd"/></svg>
<div class="a" style="left:337px;top:141px;width:502px;height:51.5px;border:1.3px solid #7ea5c0;border-radius:6px;box-shadow:0 0 3px rgba(160,200,230,.45)"></div>
<div class="a" style="left:396px;top:142px;width:1px;height:50px;background:#4a7ea3"></div>
<div class="a" style="left:778px;top:142px;width:1px;height:50px;background:#4a7ea3"></div>
<div class="a" style="left:348px;top:148px;width:37px;height:37px;background:#000;border-radius:50%"></div>
<svg class="a" style="left:350px;top:150px;" width="34" height="34" viewBox="0 0 34 34"><rect x="7.9" y="8" width="8" height="7.4" fill="#5aa37c"/><rect x="7.9" y="17.3" width="8" height="7.7" fill="#5aa37c"/><rect x="17.8" y="17.3" width="8.1" height="7.7" fill="#5aa37c"/><path d="M21.5 6.7l5 5-5 5-5-5z" fill="#5aa37c"/></svg>
<div class="a" style="left:409px;top:149px;width:206px;height:35px;background:#fff;border-radius:3px"></div>
<div class="t" style="left:415.70px;top:159px;font-size:18.3px;color:#bdbdbd;transform:scaleX(0.9192);">Search widget...</div>
<div class="a" style="left:628.2px;top:147px;width:36.799999999999955px;height:39.7px;background:#4f7fa3;border-radius:50%"></div>
<div class="a" style="left:678px;top:147px;width:37.89999999999998px;height:39.7px;background:#4f7fa3;border-radius:50%"></div>
<div class="a" style="left:728.1px;top:147px;width:37.799999999999955px;height:39.7px;background:#4f7fa3;border-radius:50%"></div>
<svg class="a" style="left:634px;top:155px;" width="24" height="24" viewBox="0 0 24 24"><path d="M8.4 12.4H4A2 2 0 0 1 2 10.4V4.4A2 2 0 0 1 4 2.4H21.4A2 2 0 0 1 23.4 4.4V10.4A2 2 0 0 1 21.4 12.4H17" fill="none" stroke="#fff" stroke-width="2"/><path d="M9.6 15.4V10.6A1.5 1.5 0 0 1 12.6 10.6V14.6H17.4A2 2 0 0 1 19.4 16.6V19.8A2 2 0 0 1 17.4 21.8H10.4Q7 21.6 5.6 19.4Q5 17 8 16.4z" fill="none" stroke="#fff" stroke-width="2" stroke-linejoin="round"/></svg>
<svg class="a" style="left:686px;top:156px;" width="22" height="22" viewBox="0 0 22 22"><rect x="2.4" y="1.8" width="17" height="18" rx="2.2" fill="none" stroke="#fff" stroke-width="2"/><circle cx="7.8" cy="7" r="1.8" fill="none" stroke="#fff" stroke-width="1.5"/><path d="M3 16.5l4.5-3.2 3 1.8 5-4.6 3.8 3.5" fill="none" stroke="#fff" stroke-width="1.8"/></svg>
<svg class="a" style="left:737px;top:157px;" width="20" height="19" viewBox="0 0 20 19"><rect x="1" y="1" width="18" height="17" fill="none" stroke="#fff" stroke-width="1.4" stroke-dasharray="1.5 1"/><path d="M5.5 5.2h9v2.2h-3.3v7.6H8.8V7.4H5.5z" fill="#fff"/></svg>
<div class="a" style="left:790.1px;top:148px;width:36.8px;height:37px;background:#5aa37c;border-radius:50%"></div>
<svg class="a" style="left:797px;top:155px;" width="23" height="23" viewBox="0 0 23 23"><g stroke="#000" stroke-width="1.9" fill="none"><path d="M2.5 2.5l6 6M20.5 2.5l-6 6M2.5 20.5l6-6M20.5 20.5l-6-6"/><path d="M2.5 8.5V2.5h6M20.5 8.5V2.5h-6M2.5 14.5v6h6M20.5 14.5v6h-6"/></g></svg>
<div class="t" style="left:1250.60px;top:124px;font-size:21px;color:#f5dc8a;transform:scaleX(0.9616);">816px</div>
<div class="t" style="left:320.30px;top:651px;font-size:21px;color:#f5dc8a;transform:scaleX(0.9824);">462px</div>
<div class="a" style="left:759px;top:364px;width:1038px;height:595.5px;border:4px solid #088ce8"></div>
<div class="a" style="left:768px;top:373px;width:1020px;height:578px;background:#2a2631"></div>
<div class="t" style="left:826.38px;top:508px;font-size:38px;color:#fff;letter-spacing:4px;transform:scaleX(1.0232);">Speed</div>
<div class="t" style="left:854.26px;top:546px;font-size:38px;color:#fff;letter-spacing:4px;transform:scaleX(1.0391);">Ctrl</div>
<div class="t" style="left:830.50px;top:696px;font-size:38px;color:#fff;letter-spacing:4px;transform:scaleX(1.0263);">Angle</div>
<div class="t" style="left:851.97px;top:734px;font-size:38px;color:#fff;letter-spacing:4px;transform:scaleX(1.0347);">Ctrl</div>
<div class="t" style="left:1046.50px;top:480px;font-size:20px;color:#fff;letter-spacing:5px;transform:scaleX(1.0108);">-100</div>
<div class="t" style="left:1653.90px;top:480px;font-size:20px;color:#fff;letter-spacing:5px;transform:scaleX(0.9965);">100</div>
<div class="t" style="left:1047.00px;top:672px;font-size:20px;color:#fff;letter-spacing:5px;">-180</div>
<div class="t" style="left:1653.49px;top:672px;font-size:20px;color:#fff;letter-spacing:5px;transform:scaleX(1.0060);">180</div>
<div class="t" style="left:1341.30px;top:418px;font-size:80px;color:#fff;transform:scaleX(0.9667);">0</div>
<div class="t" style="left:1340.77px;top:610px;font-size:80px;color:#fff;transform:scaleX(0.9936);">0</div>
<div class="t" style="left:1453.76px;top:445px;font-size:38px;color:#fff;letter-spacing:4px;transform:scaleX(1.0462);">RPM</div>
<div class="a" style="left:1469px;top:623px;width:11.5px;height:10.6px;border:2.6px solid #fff;border-radius:50%"></div>
<div class="a" style="left:1045px;top:516px;width:637.5px;height:62.6px;background:#28405f;border-radius:17px"></div>
<div class="a" style="left:1320.6px;top:505.7px;width:85px;height:85px;background:#2196f3;border-radius:15px"></div>
<div class="a" style="left:1045px;top:706px;width:637.5px;height:66.5px;background:#28405f;border-radius:18px"></div>
<div class="a" style="left:1318.75px;top:695.75px;width:88.25px;height:87.25px;background:#2196f3;border-radius:16px"></div>
<div class="a" style="left:843.5px;top:824.7px;width:852.5px;height:2.8px;background:#646266"></div>
<div class="a" style="left:1268.2px;top:826px;width:2.5px;height:106.5px;background:#646266"></div>
<div class="t" style="left:1052.94px;top:866px;font-size:38px;color:#d7c6b4;transform:scaleX(1.0184);">RUN</div>
<div class="t" style="left:1403.00px;top:866px;font-size:38px;color:#d7c6b4;transform:scaleX(1.0037);">STOP</div>
<svg class="a" style="left:1790px;top:952px;" width="30" height="30" viewBox="0 0 30 30"><circle cx="11.8" cy="12" r="5" fill="#219bd9"/><path d="M11.3 28.2Q14 14.5 28.2 11.8V28.2z" fill="#219bd9"/><path d="M17.6 8L26.6 3.8" stroke="#219bd9" stroke-width="3.2" stroke-linecap="round"/><path d="M4.1 27L7.6 18.6" stroke="#219bd9" stroke-width="3" stroke-linecap="round"/></svg>
<div class="a" style="left:300px;top:1067px;width:1935px;height:37px;background:#1b3d55"></div>
<div class="a" style="left:300px;top:1104px;width:1935px;height:307px;background:#1c4766"></div>
<div class="a" style="left:300px;top:1066px;width:1px;height:345px;background:#33668d"></div>
<div class="a" style="left:300px;top:1066px;width:1935px;height:1px;background:#33668d"></div>
<div class="a" style="left:2234px;top:1066px;width:1px;height:345px;background:#33668d"></div>
<div class="t" style="left:313.40px;top:1077px;font-size:18px;color:#fff;">Log</div>
<svg class="a" style="left:2166px;top:1074px;" width="20" height="20" viewBox="0 0 20 20"><path d="M2.6 11.2L9.3 4.5a1 1 0 0 1 1.4 0l4.6 4.6a1 1 0 0 1 0 1.4L9.5 16.3H6.3L2.6 12.6a1 1 0 0 1 0-1.4z" fill="#f5f8fb"/><path d="M4.6 10.6l4.4 4.4" stroke="#1b3d55" stroke-width="1.6"/><path d="M8.6 16.6h8" stroke="#f5f8fb" stroke-width="1.4"/></svg>
<div class="a" style="left:2198.5px;top:1081px;width:15.5px;height:5px;background:#fff;border-radius:1.5px"></div>
<div class="t" style="left:314.30px;top:1108px;font-size:18px;color:#fff;transform:scaleX(0.9727);">&quot;Compiling C:/NXP/GUI-Guider-Projects/Stepper/lvgl-simulator/../generated/guider_fonts/lv_font_arial_10.c&quot;</div>
<div class="t" style="left:314.30px;top:1135px;font-size:18px;color:#fff;transform:scaleX(0.9704);">&quot;Compiling C:/NXP/GUI-Guider-Projects/Stepper/lvgl-simulator/../generated/setup_scr_stepper.c&quot;</div>
<div class="t" style="left:314.30px;top:1163px;font-size:18px;color:#fff;transform:scaleX(0.9727);">&quot;Compiling C:/NXP/GUI-Guider-Projects/Stepper/lvgl-simulator/../generated/guider_fonts/lv_font_arial_36.c&quot;</div>
<div class="t" style="left:314.30px;top:1190px;font-size:18px;color:#fff;transform:scaleX(0.9680);">&quot;Linking simulator.exe&quot;</div>
<div class="t" style="left:314.30px;top:1218px;font-size:18px;color:#fff;transform:scaleX(0.9896);">&quot;Linking simulator.dll&quot;</div>
<svg class="a" style="left:314px;top:1247.25px;" width="14" height="14" viewBox="0 0 14 14"><path d="M1 8.5l3.5 4.5L13 1" fill="none" stroke="#15852c" stroke-width="1.4"/></svg>
<div class="t" style="left:332.50px;top:1245px;font-size:18px;color:#15852c;transform:scaleX(0.9851);">Compilation completed!</div>
<div class="t" style="left:313.29px;top:1273px;font-size:18px;color:#fff;transform:scaleX(1.0068);">build\bin\simulator.exe</div>
<div class="t" style="left:313.34px;top:1300px;font-size:18px;color:#fff;transform:scaleX(0.9587);">Preparing widgets...</div>
<div class="t" style="left:314.30px;top:1328px;font-size:18px;color:#f3a52a;transform:scaleX(0.9444);">Cleaning generated screen files...</div>
<div class="t" style="left:314.30px;top:1355px;font-size:18px;color:#f3a52a;transform:scaleX(0.9401);">Generating C code...</div>
<svg class="a" style="left:314px;top:1384.5px;" width="14" height="14" viewBox="0 0 14 14"><path d="M1 8.5l3.5 4.5L13 1" fill="none" stroke="#15852c" stroke-width="1.4"/></svg>
<div class="t" style="left:332.50px;top:1383px;font-size:18px;color:#15852c;transform:scaleX(0.9749);">Code generation completed!</div>
<div class="a" style="left:2235px;top:105px;width:325px;height:1306px;background:#1c4766"></div>
<div class="a" style="left:2235px;top:105px;width:325px;height:38px;background:#1b3d55"></div>
<div class="a" style="left:2235px;top:143px;width:325px;height:1px;background:#2d5a7a"></div>
<div class="a" style="left:2235px;top:256px;width:325px;height:1px;background:#18405e"></div>
<div class="a" style="left:2235px;top:257px;width:325px;height:1px;background:#4a6b86"></div>
<div class="a" style="left:2235px;top:420px;width:325px;height:1px;background:#18405e"></div>
<div class="a" style="left:2235px;top:421px;width:325px;height:1px;background:#4a6b86"></div>
<div class="a" style="left:2235px;top:489px;width:325px;height:1px;background:#18405e"></div>
<div class="a" style="left:2235px;top:490px;width:325px;height:1px;background:#4a6b86"></div>
<svg class="a" style="left:2246px;top:113.5px;" width="20" height="20" viewBox="0 0 20 20"><path d="M1.5 1v18.5" stroke="#bfe0f8" stroke-width="1.3"/><rect x="4" y="3" width="8" height="6" fill="#bfe0f8"/><rect x="4.6" y="11.6" width="12" height="5.5" fill="none" stroke="#bfe0f8" stroke-width="1.3"/></svg>
<svg class="a" style="left:2286px;top:113.5px;" width="20" height="20" viewBox="0 0 20 20"><path d="M10 0.5v2.5M10 9v2.6M10 17.1v2.4" stroke="#bfe0f8" stroke-width="1.3"/><rect x="6" y="3" width="8" height="6" fill="#bfe0f8"/><rect x="3.6" y="11.6" width="12.8" height="5.5" fill="none" stroke="#bfe0f8" stroke-width="1.3"/></svg>
<svg class="a" style="left:2327px;top:113.5px;" width="20" height="20" viewBox="0 0 20 20"><path d="M18.5 1v18.5" stroke="#bfe0f8" stroke-width="1.3"/><rect x="8" y="3" width="8" height="6" fill="#bfe0f8"/><rect x="3.6" y="11.6" width="12" height="5.5" fill="none" stroke="#bfe0f8" stroke-width="1.3"/></svg>
<svg class="a" style="left:2367px;top:113.5px;" width="20" height="20" viewBox="0 0 20 20"><path d="M0 1.5h20" stroke="#bfe0f8" stroke-width="1.3"/><rect x="3.6" y="4" width="5.5" height="13" fill="none" stroke="#bfe0f8" stroke-width="1.3"/><rect x="11" y="4" width="6" height="8" fill="#bfe0f8"/></svg>
<svg class="a" style="left:2408px;top:113.5px;" width="20" height="20" viewBox="0 0 20 20"><path d="M0 10h20" stroke="#bfe0f8" stroke-width="1.3"/><rect x="3.6" y="2.6" width="5.5" height="14.5" fill="none" stroke="#bfe0f8" stroke-width="1.3"/><rect x="11" y="6" width="6" height="8" fill="#bfe0f8"/></svg>
<svg class="a" style="left:2449px;top:113.5px;" width="20" height="20" viewBox="0 0 20 20"><path d="M0 18.5h20" stroke="#bfe0f8" stroke-width="1.3"/><rect x="3.6" y="2.6" width="5.5" height="13" fill="none" stroke="#bfe0f8" stroke-width="1.3"/><rect x="11" y="8" width="6" height="8" fill="#bfe0f8"/></svg>
<svg class="a" style="left:2489px;top:113.5px;" width="20" height="20" viewBox="0 0 20 20"><path d="M2 2h16M2 18h16" stroke="#bfe0f8" stroke-width="1.3"/><rect x="4" y="6.5" width="12" height="7" rx="1" fill="#bfe0f8"/></svg>
<svg class="a" style="left:2530px;top:113.5px;" width="20" height="20" viewBox="0 0 20 20"><path d="M2.5 1v18M17.5 1v18" stroke="#bfe0f8" stroke-width="1.3"/><rect x="6" y="4" width="8" height="12" rx="1" fill="#bfe0f8"/></svg>
<svg class="a" style="left:2246px;top:161px;" width="20" height="16" viewBox="0 0 20 16"><rect x="1.6" y="1.6" width="16.8" height="10.4" fill="none" stroke="#6fe3d6" stroke-width="1.5"/><path d="M10 12v2.5M6 14.5h8" stroke="#6fe3d6" stroke-width="1.5"/></svg>
<div class="t" style="left:2272.43px;top:161px;font-size:15.6px;color:#fff;transform:scaleX(0.9668);">Name</div>
<div class="a" style="left:2338px;top:150.5px;width:210px;height:37px;border:1.2px solid #687682"></div>
<div class="t" style="left:2342.80px;top:162px;font-size:17.5px;color:#fff;transform:scaleX(0.9173);">stepper</div>
<div class="t" style="left:2264.00px;top:211px;font-size:15.6px;color:#fff;transform:scaleX(0.9118);">ScrollBar</div>
<div class="a" style="left:2338px;top:200.5px;width:210px;height:37px;border:1.2px solid #687682;border-radius:5px"></div>
<div class="t" style="left:2347.80px;top:213px;font-size:16px;color:#fff;transform:scaleX(1.0277);">Off</div>
<svg class="a" style="left:2529px;top:215px;" width="13" height="9" viewBox="0 0 13 9"><path d="M1.5 1.5l5 5 5-5" fill="none" stroke="#fff" stroke-width="2"/></svg>
<div class="t" style="left:2247.03px;top:269px;font-size:15.2px;color:#fff;font-weight:700;transform:scaleX(0.9685);">Flag</div>
<div class="t" style="left:2279.40px;top:316px;font-size:15.6px;color:#fff;transform:scaleX(0.9677);">Add</div>
<div class="a" style="left:2338px;top:302px;width:210px;height:44px;border:1.2px solid #687682"></div>
<div class="t" style="left:2356.80px;top:316px;font-size:17px;color:#c9c9c9;transform:scaleX(0.9250);">add flag...</div>
<div class="t" style="left:2265.57px;top:373px;font-size:15.6px;color:#fff;transform:scaleX(0.9292);">Remove</div>
<div class="a" style="left:2338px;top:359px;width:210px;height:44px;border:1.2px solid #687682"></div>
<div class="a" style="left:2348px;top:368px;width:104px;height:30px;background:#f4f4f4;border-radius:3px"></div>
<div class="t" style="left:2359.50px;top:377px;font-size:17px;color:#7d7a8c;transform:scaleX(0.9192);">Scrollable</div>
<svg class="a" style="left:2433px;top:379px;" width="13" height="13" viewBox="0 0 13 13"><path d="M1.5 1.5l10 10M11.5 1.5l-10 10" stroke="#7d7a8c" stroke-width="1.2"/></svg>
<div class="t" style="left:2267.50px;top:443px;font-size:15.6px;color:#fff;transform:scaleX(0.9481);">Custom</div>
<div class="a" style="left:2340.5px;top:430px;width:204.5px;height:40.5px;border:1.2px solid #687682"></div>
<svg class="a" style="left:2417px;top:443px;" width="15" height="14" viewBox="0 0 15 14"><rect x="1" y="1" width="13" height="9.5" rx="1.5" fill="none" stroke="#c9ccd0" stroke-width="1.3"/><path d="M5.5 3.8l-1.8 2 1.8 2M9.5 3.8l1.8 2-1.8 2" fill="none" stroke="#c9ccd0" stroke-width="1.1"/><path d="M3 12.8h9" stroke="#c9ccd0" stroke-width="1.3"/></svg>
<div class="t" style="left:2436.50px;top:443px;font-size:16px;color:#fff;transform:scaleX(0.9074);">Code</div>
<div class="t" style="left:2247.60px;top:500px;font-size:15.2px;color:#fff;font-weight:700;transform:scaleX(0.9595);">Style</div>
<div class="a" style="left:2248px;top:549px;width:300px;height:77px;border:1.2px solid #346283"></div>
<div class="a" style="left:2261px;top:545px;width:127px;height:8px;background:#1c4766"></div>
<div class="t" style="left:2274.00px;top:544px;font-size:14px;color:#fff;font-weight:700;letter-spacing:2.2px;transform:scaleX(0.9627);">Part &amp; State</div>
<div class="a" style="left:2261.4px;top:569px;width:272.4px;height:37px;background:#1e5073"></div>
<div class="a" style="left:2261.4px;top:569px;width:121px;height:37px;border:1.2px solid #5d6b78;border-radius:4px"></div>
<div class="a" style="left:2383px;top:569px;width:121px;height:37px;border:1.2px solid #5d6b78;border-radius:4px"></div>
<div class="t" style="left:2270.63px;top:581px;font-size:16px;color:#fff;transform:scaleX(1.0738);">Main</div>
<svg class="a" style="left:2364px;top:583px;" width="13" height="9" viewBox="0 0 13 9"><path d="M1.5 1.5l5 5 5-5" fill="none" stroke="#fff" stroke-width="1.8"/></svg>
<div class="t" style="left:2391.98px;top:581px;font-size:16px;color:#fff;transform:scaleX(1.0189);">Default</div>
<svg class="a" style="left:2485px;top:583px;" width="13" height="9" viewBox="0 0 13 9"><path d="M1.5 1.5l5 5 5-5" fill="none" stroke="#fff" stroke-width="1.8"/></svg>
<svg class="a" style="left:2507px;top:578px;" width="22" height="17" viewBox="0 0 22 17"><path d="M1.2 8.5C3.8 4 7.2 2 11 2s7.2 2 9.8 6.5C18.2 13 14.8 15 11 15S3.8 13 1.2 8.5z" fill="none" stroke="#f0d27a" stroke-width="2"/><circle cx="11" cy="8.5" r="3.2" fill="none" stroke="#f0d27a" stroke-width="2"/></svg>
<div class="a" style="left:2248px;top:651px;width:300px;height:127px;border:1.2px solid #346283"></div>
<div class="a" style="left:2261px;top:645px;width:147px;height:10px;background:#1c4766"></div>
<div class="t" style="left:2274.00px;top:646px;font-size:14px;color:#fff;font-weight:700;letter-spacing:2.2px;transform:scaleX(0.9245);">Background</div>
<svg class="a" style="left:2375px;top:643px;" width="20" height="20" viewBox="0 0 20 20"><path d="M12 2.5l5.5 5.5-6 6-5.5-5.5z" fill="#bfe0f8"/><path d="M5.5 9.2l5.3 5.3-2.5 3.5-6.3-6.3z" fill="#8ec5f0"/><path d="M14 4l2-2.5 3 3-2.5 2" fill="#bfe0f8"/></svg>
<div class="a" style="left:2261.4px;top:671px;width:272.4px;height:37.5px;background:#1e5073"></div>
<div class="a" style="left:2268.4px;top:677.4px;width:24.2px;height:24.2px;background:#2a2631;border:1.2px solid #8a7f80;border-radius:3px"></div>
<div class="t" style="left:2299.20px;top:683px;font-size:15.5px;color:#e8e8e8;font-weight:700;transform:scaleX(0.9716);">#2A2631</div>
<div class="t" style="left:2421.60px;top:684px;font-size:14px;color:#e0e0e0;transform:scaleX(0.8933);">Opacity</div>
<div class="t" style="left:2467.70px;top:683px;font-size:15px;color:#e8e8e8;font-weight:700;transform:scaleX(0.9283);">100%</div>
<div class="a" style="left:2261.4px;top:720.7px;width:272.4px;height:37.8px;background:#1e5073"></div>
<svg class="a" style="left:2267px;top:726.5px;" width="27" height="26" viewBox="0 0 27 26"><rect x="1.5" y="1.2" width="24" height="23.5" rx="3" fill="none" stroke="#6a9ec4" stroke-width="1.5" stroke-dasharray="6 4" stroke-dashoffset="-2"/></svg>
<svg class="a" style="left:2272px;top:733px;" width="16" height="14" viewBox="0 0 16 14"><rect x="1" y="1" width="14" height="12" rx="2" fill="none" stroke="#8a7a70" stroke-width="1.1"/><rect x="3.3" y="3" width="1.6" height="1.6" fill="#8a7a70"/><path d="M1.5 12.5L5.5 7l4 5.5M7.5 9.5l3-3.5 4 5" fill="none" stroke="#8a7a70" stroke-width="1.1"/></svg>
<div class="a" style="left:2299px;top:738.3px;width:110px;height:2px;background:#6d8ea5"></div>
<div class="a" style="left:2299px;top:740.6px;width:110px;height:1.2px;background:#7a6f6f"></div>
<div class="a" style="left:2404.8px;top:732.6px;width:15.2px;height:15.2px;background:#f2d98c;border-radius:50%;border:2px solid #fff"></div>
<div class="a" style="left:2434px;top:727px;width:25px;height:25px;border-radius:4px;background-color:#fff;background-image:linear-gradient(45deg,#d8d8d8 25%,transparent 25%,transparent 75%,#d8d8d8 75%),linear-gradient(45deg,#d8d8d8 25%,transparent 25%,transparent 75%,#d8d8d8 75%);background-size:6px 6px;background-position:0 0,3px 3px"></div>
<div class="t" style="left:2469.00px;top:733px;font-size:15.5px;color:#e8e8e8;font-weight:700;transform:scaleX(0.8467);">#FFFFFF</div>
<div class="a" style="left:1662px;top:67px;width:1px;height:37px;background:#2a4d68"></div>
<div class="a" style="left:1744px;top:67px;width:1px;height:37px;background:#2a4d68"></div>
<div class="a" style="left:1752px;top:67px;width:1px;height:37px;background:#2a4d68"></div>
<div class="a" style="left:1832px;top:67px;width:1px;height:37px;background:#2a4d68"></div>
<div class="a" style="left:1839px;top:67px;width:1px;height:37px;background:#2a4d68"></div>
<div class="a" style="left:1992px;top:67px;width:1px;height:37px;background:#2a4d68"></div>
<div class="a" style="left:1999px;top:67px;width:1px;height:37px;background:#2a4d68"></div>
<div class="a" style="left:2229px;top:67px;width:1px;height:37px;background:#2a4d68"></div>
<div class="a" style="left:1999.5px;top:67px;width:35.5px;height:37px;background:#172f44"></div>
<svg class="a" style="left:1674px;top:76px;" width="20" height="19" viewBox="0 0 20 19"><rect x="0.6" y="1" width="12.4" height="12.4" fill="#bfe0f8"/><path d="M14.5 6.5h3.6v11.2H6.5v-3" fill="none" stroke="#bfe0f8" stroke-width="1.8"/></svg>
<svg class="a" style="left:1714px;top:76px;" width="20" height="19" viewBox="0 0 20 19"><rect x="1.5" y="1.9" width="11" height="11" fill="none" stroke="#bfe0f8" stroke-width="1.8"/><path d="M14 6.5h4.4v11.3H7V14h7z" fill="#bfe0f8"/></svg>
<svg class="a" style="left:1761px;top:77px;" width="22" height="17" viewBox="0 0 22 17"><path d="M1 7.5L9 1v4c6 0 11 3 12 11-2-4.5-6-6-12-6v4z" fill="#bfe0f8"/></svg>
<svg class="a" style="left:1801px;top:77px;" width="22" height="17" viewBox="0 0 22 17"><path d="M21 7.5L13 1v4C7 5 2 8 1 16c2-4.5 6-6 12-6v4z" fill="#bfe0f8"/></svg>
<svg class="a" style="left:1849px;top:75px;" width="21" height="20" viewBox="0 0 21 20"><circle cx="8" cy="8" r="6.3" fill="none" stroke="#bfe0f8" stroke-width="2.4"/><path d="M12.5 12.5l6 6" stroke="#bfe0f8" stroke-width="2.8" stroke-linecap="round"/><path d="M5 8h6" stroke="#bfe0f8" stroke-width="2.2"/></svg>
<div class="t" style="left:1884.05px;top:79px;font-size:14.7px;color:#fff;transform:scaleX(0.9478);">170%</div>
<svg class="a" style="left:1932px;top:81px;" width="15" height="10" viewBox="0 0 15 10"><path d="M1.5 1.5l6 6 6-6" fill="none" stroke="#bfe0f8" stroke-width="1.6"/></svg>
<svg class="a" style="left:1962px;top:75px;" width="21" height="20" viewBox="0 0 21 20"><circle cx="8" cy="8" r="6.3" fill="none" stroke="#bfe0f8" stroke-width="2.4"/><path d="M12.5 12.5l6 6" stroke="#bfe0f8" stroke-width="2.8" stroke-linecap="round"/><path d="M5 8h6M8 5v6" stroke="#bfe0f8" stroke-width="2.2"/></svg>
<div class="a" style="left:2009px;top:77px;width:16.6px;height:16.4px;background:#b0545e;border-radius:2px"></div>
<svg class="a" style="left:2044px;top:75px;" width="24" height="21" viewBox="0 0 24 21"><path d="M13 1.5l9 9-7.5 7.5H9L2 11z" fill="#f5d98b"/><path d="M6 8.5l6.5 6.5" stroke="#1b3d55" stroke-width="0"/><path d="M4.5 11.5L8 8l5.5 5.5L11 16H8.5z" fill="#1b3d55"/><path d="M9 18.5h13.5" stroke="#f5d98b" stroke-width="2.4"/></svg>
<svg class="a" style="left:2084px;top:74px;" width="19" height="23" viewBox="0 0 19 23"><path d="M1 1h11l6 6v15H1z" fill="#bfe0f8"/><path d="M12 1v6h6" fill="#1b3d55" opacity=".55"/><path d="M6.5 12l-2.5 2.5 2.5 2.5M12.5 12l2.5 2.5-2.5 2.5M10.5 11l-2 7" fill="none" stroke="#1b3d55" stroke-width="1.1"/></svg>
<svg class="a" style="left:2120px;top:75px;" width="23" height="20" viewBox="0 0 23 20"><path d="M2 18.5l10-10" stroke="#dd46dd" stroke-width="4" stroke-linecap="round"/><path d="M8 4.5l4-3.5c3 0 6 1.5 8 4l-2 .5 3 3-3 3-3-3-2 2-3.5-3.5z" fill="#dd46dd"/></svg>
<div class="a" style="left:2161px;top:75px;width:21.4px;height:21px;background:#00f0a0;border-radius:50%"></div>
<div class="t" style="left:2166.50px;top:79px;font-size:14px;color:#17384e;font-weight:700;transform:scaleX(1.0500);">R</div>
<svg class="a" style="left:2201px;top:75px;" width="18" height="21" viewBox="0 0 18 21"><path d="M1.5 2.5Q1.5 0.5 3.3 1.5L17 9.5Q18.2 10.5 17 11.5L3.3 19.5Q1.5 20.5 1.5 18.5z" fill="#00f0a0"/></svg></body></html>
